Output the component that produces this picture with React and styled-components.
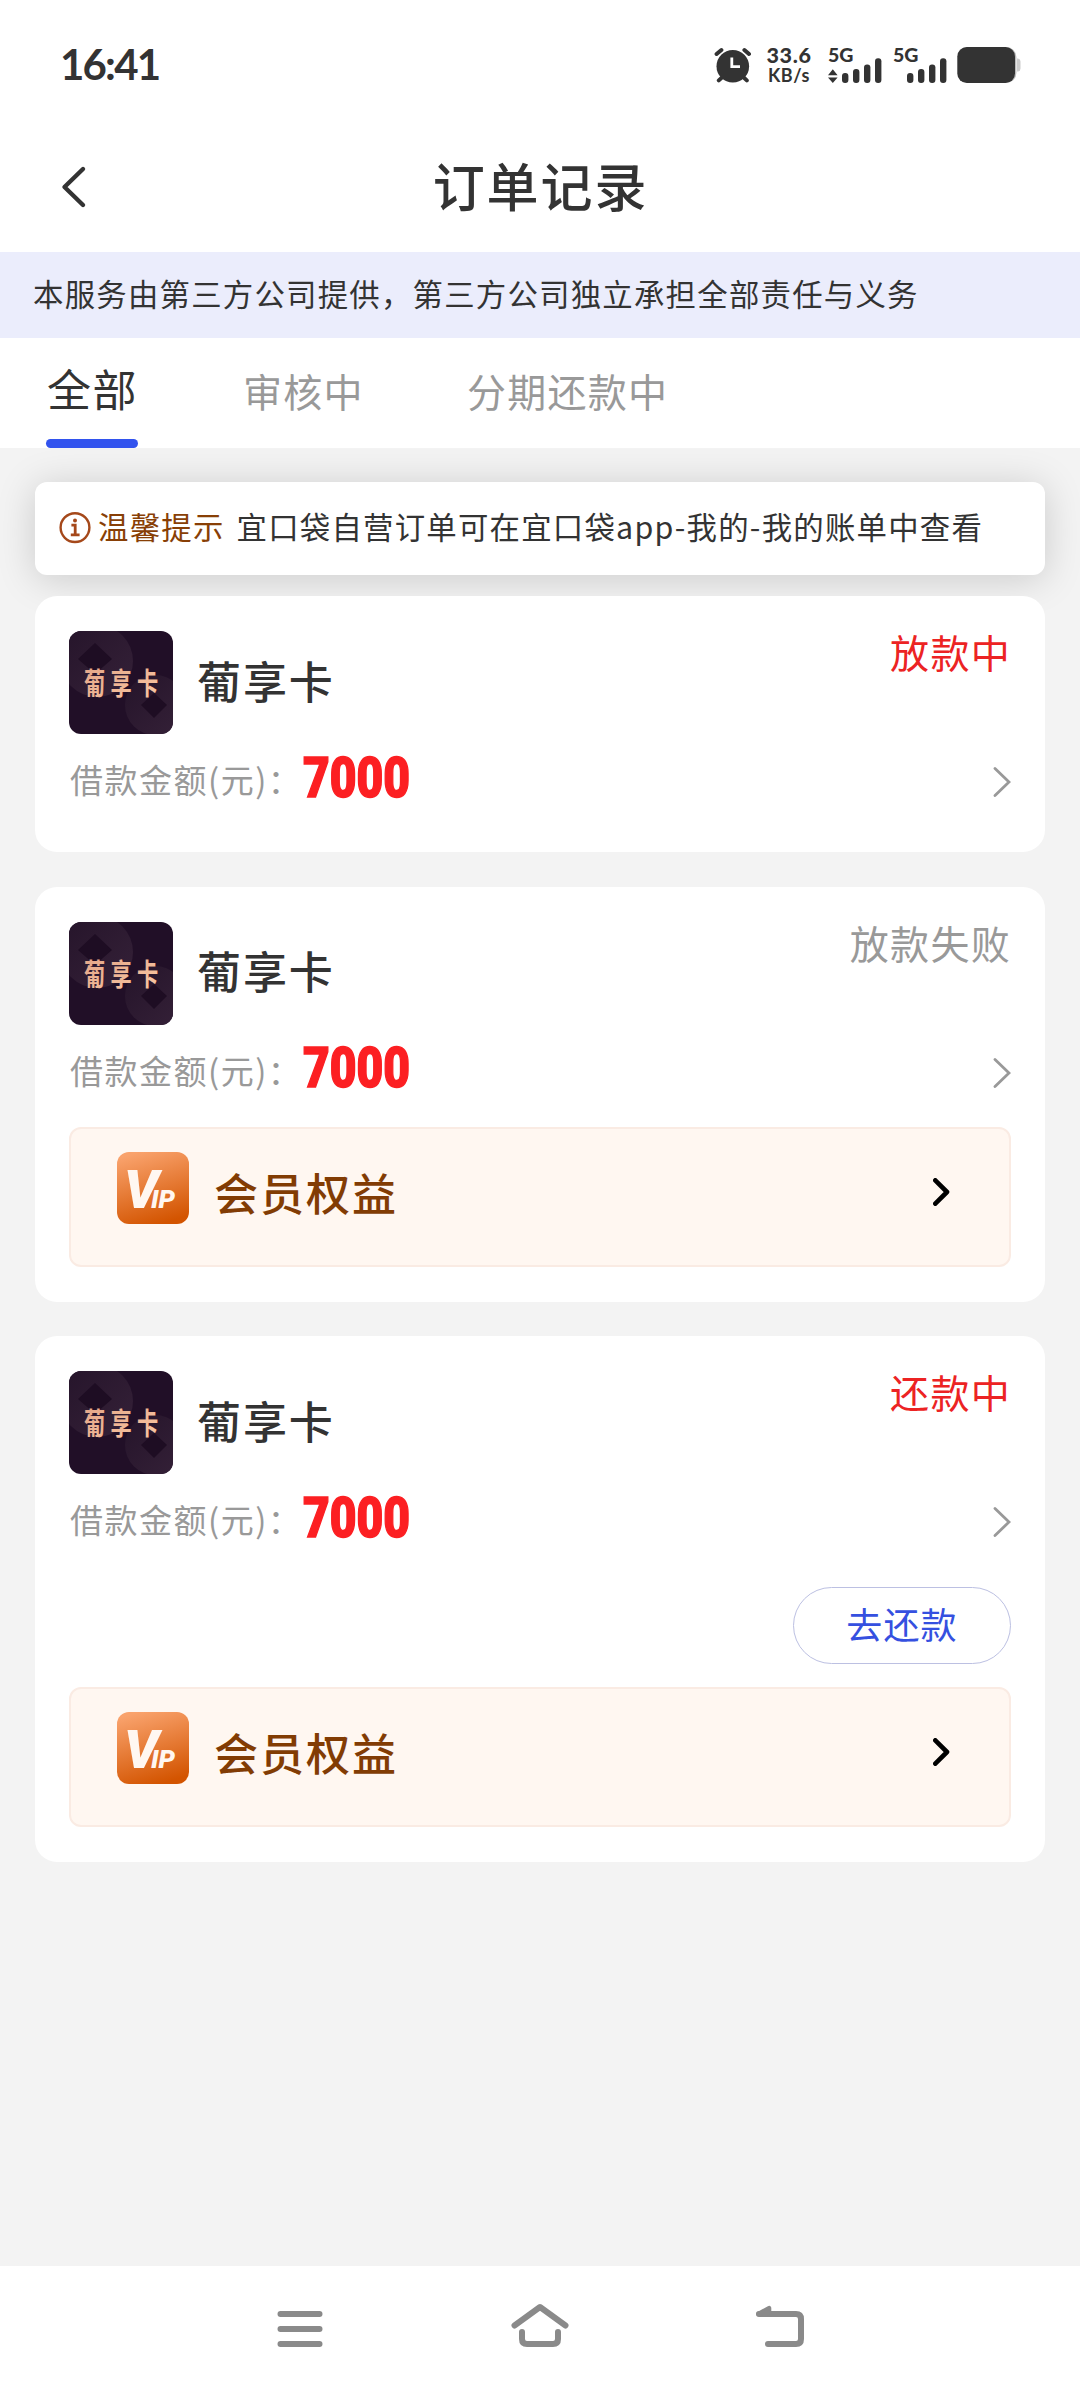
import React from "react";
import styled, { createGlobalStyle } from "styled-components";

const Global = createGlobalStyle`
  * { box-sizing: border-box; }
  body { margin: 0; background: #f3f3f3; }
`;

const Screen = styled.div`
  width: 1080px;
  height: 2392px;
  display: flex;
  flex-direction: column;
  background: #f3f3f3;
  color: #333;
  font-family: "Noto Sans CJK SC", "Noto Sans", sans-serif;
  overflow: hidden;
`;

/* ---------- status bar ---------- */
const StatusBar = styled.div`
  height: 130px;
  flex: none;
  display: flex;
  align-items: center;
  justify-content: space-between;
  padding: 0 59px 0 60px;
  background: #fff;
`;
const Clock = styled.div`
  margin-top: -2px;
  font: 700 42px/50px Lato, sans-serif;
  letter-spacing: -1.8px;
`;
const StatusIcons = styled.div`
  height: 36px;
  display: flex;
  align-items: flex-start;
`;
const NetSpeed = styled.div`
  width: 46px;
  margin: -2px 16px 0 14px;
  text-align: center;
  font-family: Lato, sans-serif;
  font-weight: 900;
`;
const SpeedValue = styled.div`
  font-size: 21.5px;
  line-height: 20px;
  letter-spacing: 0.6px;
`;
const SpeedUnit = styled.div`
  font-size: 18px;
  line-height: 21px;
  font-weight: 700;
  letter-spacing: 0.6px;
`;
const SignalBox = styled.div`
  width: 54px;
  height: 36px;
  margin-right: ${(p) => p.$gap}px;
  display: flex;
  flex-direction: column;
  position: relative;
`;
const SignalLabel = styled.div`
  font: 900 19.5px/15px Lato, sans-serif;
`;
const SignalBars = styled.svg`
  position: absolute;
  left: 0;
  top: 0;
`;

/* ---------- header ---------- */
const Header = styled.header`
  height: 122px;
  flex: none;
  display: grid;
  grid-template-columns: 120px 1fr 120px;
  align-items: start;
  background: #fff;
`;
const BackButton = styled.div`
  padding: 35px 0 0 60px;
  line-height: 0;
`;
const Title = styled.h1`
  margin: 0;
  padding: 15px 0 0 1px;
  font-size: 52px;
  line-height: 80px;
  font-weight: 500;
  letter-spacing: 1.9px;
  text-align: center;
`;

const Notice = styled.div`
  height: 86px;
  flex: none;
  padding-left: 33px;
  background: #ebedfc;
  font-size: 30.4px;
  line-height: 83px;
  letter-spacing: 1.24px;
  white-space: nowrap;
`;

/* ---------- tabs ---------- */
const Tabs = styled.nav`
  height: 110px;
  flex: none;
  display: flex;
  padding-left: 46px;
  gap: 103px;
  background: #fff;
`;
const Tab = styled.div`
  height: 110px;
  display: flex;
  flex-direction: column;
  justify-content: space-between;
  font-size: 39px;
  line-height: 105px;
  letter-spacing: 1.3px;
  color: #999;
  white-space: nowrap;
`;
const ActiveTab = styled(Tab)`
  margin-right: 2px;
  font-size: 44px;
  line-height: 101px;
  letter-spacing: 1.5px;
  color: #333;
`;
const TabLabel = styled.div`
  height: 101px;
  padding-left: 1px;
`;
const TabLine = styled.div`
  height: 9px;
  border-radius: 4.5px;
  background: #3253ee;
`;

/* ---------- content ---------- */
const Content = styled.main`
  flex: 1;
  min-height: 0;
  padding: 34px 35px 0;
  display: flex;
  flex-direction: column;
`;
const Tip = styled.div`
  height: 93px;
  flex: none;
  margin-bottom: 21px;
  padding: 0 0 0 23px;
  display: flex;
  align-items: center;
  border-radius: 12px;
  background: #fff;
  box-shadow: 0 4px 38px rgba(0, 0, 0, 0.17);
  font-size: 30.4px;
  line-height: 44px;
  letter-spacing: 1.24px;
  white-space: nowrap;
`;
const TipTag = styled.span`
  margin: -5px 12px 0 6px;
  color: #883f06;
`;
const TipText = styled.span`
  margin-top: -5px;
`;

const Cards = styled.div`
  display: flex;
  flex-direction: column;
  gap: 34.6px;
  position: relative;
`;
const Card = styled.section`
  padding: 35px 34px ${(p) => (p.$plain ? 26 : 35)}px;
  border-radius: 22px;
  background: #fff;
  display: flex;
  flex-direction: column;
`;
const CardTop = styled.div`
  height: 103px;
  display: flex;
  align-items: center;
`;
const Logo = styled.div`
  width: 104px;
  height: 103px;
  border-radius: 12px;
  overflow: hidden;
`;
const Name = styled.div`
  margin: -6px 0 0 24px;
  font-size: 44px;
  line-height: 60px;
  font-weight: 500;
  letter-spacing: 1.9px;
`;
const State = styled.div`
  margin-left: auto;
  align-self: flex-start;
  margin-top: -10px;
  font-size: 39px;
  line-height: 60px;
  letter-spacing: 1.3px;
  color: ${(p) => (p.$muted ? "#999" : "#ec2323")};
`;
const AmountRow = styled.div`
  height: 92px;
  display: flex;
  align-items: center;
`;
const AmountLabel = styled.div`
  width: 234px;
  margin-top: -2px;
  padding-left: 1px;
  font-size: 33px;
  line-height: 60px;
  letter-spacing: 1.5px;
  color: #999;
  white-space: nowrap;
`;
const Amount = styled.div`
  width: 108px;
  margin-top: -5px;
  font: 900 55px/60px Roboto, sans-serif;
  color: #fc1f22;
  -webkit-text-stroke: 1.5px #fc1f22;
  white-space: nowrap;
  transform: scaleX(0.84);
  transform-origin: left center;
`;
const GreyArrow = styled.svg`
  margin: 4px 0 0 auto;
`;
const Actions = styled.div`
  height: 111px;
  display: flex;
  justify-content: flex-end;
  align-items: flex-start;
  padding-top: 21px;
`;
const RepayButton = styled.div`
  width: 218px;
  height: 77px;
  border: 1px solid #bcc0e2;
  border-radius: 39px;
  text-align: center;
  font-size: 36px;
  line-height: 70px;
  letter-spacing: 1.2px;
  color: #3550e0;
`;
const Member = styled.div`
  height: 140px;
  margin-top: 10px;
  padding: 23px 59px 0 46px;
  display: flex;
  align-items: flex-start;
  border: 2px solid #faebe3;
  border-radius: 12px;
  background: #fff7f1;
`;
const MemberText = styled.div`
  margin: 10px 0 0 25px;
  font-size: 44px;
  line-height: 60px;
  font-weight: 500;
  letter-spacing: 2px;
  color: #823c04;
`;
const BlackArrow = styled.svg`
  margin: 26px 0 0 auto;
`;

/* ---------- system navigation ---------- */
const NavBar = styled.footer`
  height: 126px;
  flex: none;
  display: flex;
  justify-content: center;
  background: #fff;
`;
const NavItem = styled.div`
  width: 240px;
  display: flex;
  justify-content: center;
  padding-top: 30px;
`;

function Alarm() {
  return (
    <svg width="38" height="36" viewBox="0 0 38 36">
      <g stroke="#333" strokeWidth="4" strokeLinecap="round">
        <path d="M2.6 7 7.4 3M35 7 30.4 3M8.5 30 4.8 33.4M29.2 30 32.8 33.4" />
      </g>
      <circle cx="18.8" cy="19.2" r="16.3" fill="#333" />
      <path d="M17.8 10.5V19.6H26" fill="none" stroke="#fff" strokeWidth="2.8" />
    </svg>
  );
}

function Signal({ traffic, gap }) {
  return (
    <SignalBox $gap={gap}>
      <SignalLabel>5G</SignalLabel>
      <SignalBars width="54" height="36" viewBox="0 0 54 36" fill="#333">
        {traffic && <path d="M0 28.2 4.8 22.3 9.6 28.2ZM0 30.4 4.8 36 9.6 30.4Z" />}
        <rect x="14" y="26" width="6.4" height="10" rx="3" />
        <rect x="25" y="22" width="6.4" height="14" rx="3" />
        <rect x="36" y="17.6" width="6.4" height="18.4" rx="3" />
        <rect x="47" y="11.3" width="6.4" height="24.7" rx="3" />
      </SignalBars>
    </SignalBox>
  );
}

function Battery() {
  return (
    <svg width="64" height="36" viewBox="0 0 64 36">
      <rect x="1" y="0" width="58.4" height="36" rx="10" fill="#bbb" />
      <path d="M60 11.5h1a3 3 0 0 1 2.5 3v7a3 3 0 0 1-2.5 3h-1z" fill="#ccc" />
      <rect x="0.3" y="0" width="57.7" height="36" rx="9.5" fill="#333" />
    </svg>
  );
}

function CardLogo() {
  return (
    <Logo>
      <svg width="104" height="103" viewBox="0 0 104 103">
        <defs>
          <linearGradient id="coin" x1="0" y1="0" x2="1" y2="1">
            <stop offset="0" stopColor="#25142a" />
            <stop offset="1" stopColor="#352138" />
          </linearGradient>
          <linearGradient id="gold" x1="0" y1="0" x2="1" y2="1">
            <stop offset="0" stopColor="#e2a386" />
            <stop offset="1" stopColor="#fbc9a4" />
          </linearGradient>
        </defs>
        <rect width="104" height="103" fill="#210f27" />
        <circle cx="28" cy="30" r="36" fill="url(#coin)" />
        <path d="M26 12 43 28 26 43 9 28Z" fill="#1e0d23" />
        <circle cx="86" cy="74" r="30" fill="url(#coin)" />
        <path d="M85 62 98 74 85 87 72 74Z" fill="#1e0d23" />
        <text
          transform="translate(15 63) scale(0.72 1)"
          fontFamily="Noto Sans CJK SC, sans-serif"
          fontSize="29.5"
          fontWeight="700"
          letterSpacing="7.3"
          fill="url(#gold)"
        >
          葡享卡
        </text>
      </svg>
    </Logo>
  );
}

function VipIcon() {
  return (
    <svg width="72" height="72" viewBox="0 0 72 72">
      <defs>
        <linearGradient id="vip" x1="0.3" y1="0" x2="0.6" y2="1">
          <stop offset="0" stopColor="#f9a26c" />
          <stop offset="1" stopColor="#d35400" />
        </linearGradient>
      </defs>
      <rect width="72" height="72" rx="12" fill="url(#vip)" />
      <text y="55.5" fill="#fff7f1" fontFamily="Roboto, sans-serif" fontStyle="italic" fontWeight="900">
        <tspan x="7" fontSize="54">V</tspan>
        <tspan x="34" fontSize="26">IP</tspan>
      </text>
    </svg>
  );
}

function MemberBar() {
  return (
    <Member>
      <VipIcon />
      <MemberText>会员权益</MemberText>
      <BlackArrow width="17" height="28" viewBox="0 0 17 28" fill="none">
        <path d="M2.3 2.3 14 14 2.3 25.7" stroke="#000" strokeWidth="4.6" strokeLinecap="round" strokeLinejoin="round" />
      </BlackArrow>
    </Member>
  );
}

function OrderCard({ state, muted, repay, member }) {
  return (
    <Card $plain={!member}>
      <CardTop>
        <CardLogo />
        <Name>葡享卡</Name>
        <State $muted={muted}>{state}</State>
      </CardTop>
      <AmountRow>
        <AmountLabel>借款金额(元)：</AmountLabel>
        <Amount>7000</Amount>
        <GreyArrow width="18" height="30" viewBox="0 0 18 30" fill="none">
          <path d="M2 1.5 16 15 2 28.5" stroke="#999" strokeWidth="2.8" strokeLinecap="round" />
        </GreyArrow>
      </AmountRow>
      {repay && (
        <Actions>
          <RepayButton>去还款</RepayButton>
        </Actions>
      )}
      {member && <MemberBar />}
    </Card>
  );
}

const orders = [
  { state: "放款中" },
  { state: "放款失败", muted: true, member: true },
  { state: "还款中", repay: true, member: true },
];

export default function App() {
  return (
    <Screen>
      <Global />
      <StatusBar>
        <Clock>16:41</Clock>
        <StatusIcons>
          <Alarm />
          <NetSpeed>
            <SpeedValue>33.6</SpeedValue>
            <SpeedUnit>KB/s</SpeedUnit>
          </NetSpeed>
          <Signal traffic gap={11} />
          <Signal gap={10} />
          <Battery />
        </StatusIcons>
      </StatusBar>
      <Header>
        <BackButton>
          <svg width="28" height="44" viewBox="0 0 28 44" fill="none">
            <path d="M23 4 4.5 22 23 40" stroke="#333" strokeWidth="4.4" strokeLinecap="round" strokeLinejoin="round" />
          </svg>
        </BackButton>
        <Title>订单记录</Title>
      </Header>
      <Notice>本服务由第三方公司提供，第三方公司独立承担全部责任与义务</Notice>
      <Tabs>
        <ActiveTab>
          <TabLabel>全部</TabLabel>
          <TabLine />
        </ActiveTab>
        <Tab>审核中</Tab>
        <Tab>分期还款中</Tab>
      </Tabs>
      <Content>
        <Tip>
          <svg width="34" height="34" viewBox="0 0 34 34">
            <circle cx="17" cy="15.6" r="14.4" fill="none" stroke="#a5481a" strokeWidth="2.4" />
            <circle cx="17" cy="8.6" r="2" fill="#a5481a" />
            <path d="M13.4 13.2H17.2V22.4M12.8 22.8H21.6" fill="none" stroke="#a5481a" strokeWidth="2.8" />
          </svg>
          <TipTag>温馨提示</TipTag>
          <TipText>宜口袋自营订单可在宜口袋app-我的-我的账单中查看</TipText>
        </Tip>
        <Cards>
          {orders.map((order) => (
            <OrderCard key={order.state} {...order} />
          ))}
        </Cards>
      </Content>
      <NavBar>
        <NavItem>
          <svg width="60" height="60" viewBox="0 0 60 60">
            <path d="M10.5 18H49.5M10.5 33H49.5M10.5 48H49.5" stroke="#8a8a8a" strokeWidth="6" strokeLinecap="round" />
          </svg>
        </NavItem>
        <NavItem>
          <svg width="60" height="60" viewBox="0 0 60 60" fill="none" stroke="#8a8a8a" strokeWidth="6" strokeLinecap="round" strokeLinejoin="round">
            <path d="M4.5 29.5 30 11 55.5 29.5M12 36V43Q12 48 17 48H43Q48 48 48 43V36" />
          </svg>
        </NavItem>
        <NavItem>
          <svg width="60" height="60" viewBox="0 0 60 60" fill="none" stroke="#8a8a8a" strokeWidth="6" strokeLinecap="round" strokeLinejoin="round">
            <path d="M9 18H46Q51 18 51 23V43Q51 48 46 48H18" />
            <path d="M8.5 18 19 12.2V17Z" strokeWidth="4.6" fill="#8a8a8a" />
          </svg>
        </NavItem>
      </NavBar>
    </Screen>
  );
}
